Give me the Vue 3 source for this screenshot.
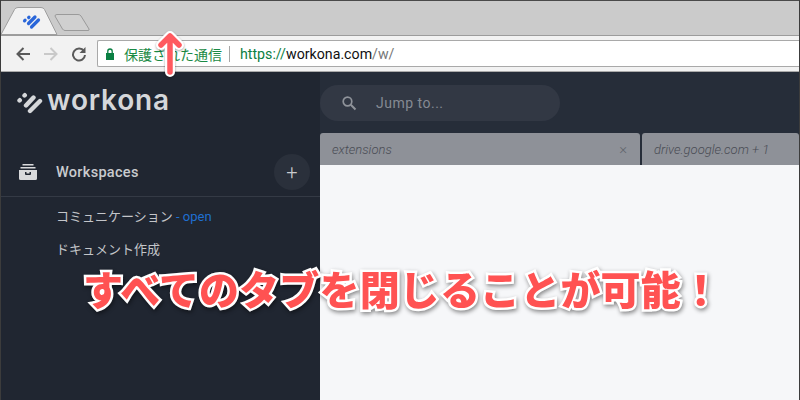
<script setup>
const workspaces = [
  { name: 'コミュニケーション', open: true },
  { name: 'ドキュメント作成', open: false },
]
</script>

<template>
  <div class="page">
    <header class="tabstrip">
      <svg class="tabs" width="95" height="35" viewBox="0 0 95 35">
        <path d="M57 34.500H1L14.500 9.500Q15.500 7.500 18 7.500H41Q43.500 7.500 44.500 9.500Z" fill="#f2f2f2" stroke="#9e9e9e" />
        <path d="M55 16Q55 14.500 57 14.500H78Q80 14.500 81 16L89 29Q89.500 30.500 88 30.500H65Q63.500 30.500 62.500 29L55.500 17Z" fill="#d0d0d0" stroke="#9a9a9a" />
        <g stroke="#2a66d9" fill="none" stroke-linecap="round">
          <path d="M24.500 20.800l.6-.6M28.700 17.500l.3-.3" stroke-width="3.200" />
          <path d="M28.500 23.500l6.500-6.500M31.500 27l7-7" stroke-width="3.200" />
        </g>
      </svg>
    </header>

    <div class="toolbar">
      <svg class="nav" width="16" height="16" viewBox="0 0 16 16"><path d="M15 8H2.500M8.500 2L2.500 8l6 6" fill="none" stroke="#5a5a5a" stroke-width="2" /></svg>
      <svg class="nav" width="16" height="16" viewBox="0 0 16 16"><path d="M1 8h12.500M7.500 2l6 6-6 6" fill="none" stroke="#c9c9c9" stroke-width="2" /></svg>
      <svg class="nav" width="16" height="16" viewBox="0 0 16 16"><path d="M13 5.200A6 6 0 1 0 14 9" fill="none" stroke="#5a5a5a" stroke-width="2" /><path d="M14.500 1v6h-6z" fill="#5a5a5a" /></svg>
      <div class="omnibox">
        <svg width="10" height="12" viewBox="0 0 10 12"><path d="M1 5h8v7H1z" fill="#0b8043" /><path d="M2.800 5V3.200a2.200 2.200 0 0 1 4.400 0V5" fill="none" stroke="#0b8043" stroke-width="1.300" /></svg>
        <span class="secure">保護された通信</span>
        <span class="sep"></span>
        <span class="url"><span class="https">https://</span>workona.com<span class="path">/w/</span></span>
      </div>
    </div>

    <main class="app">
      <aside class="sidebar">
        <div class="brand">
          <svg class="mark" width="26" height="23" viewBox="0 0 26 23">
            <g stroke="#d5d7da" fill="none" stroke-linecap="round">
              <path d="M2.500 9.500l.3-.3M7.500 4.500l.3-.3" stroke-width="4.400" />
              <path d="M9 14.500l7.500-8M13 20l10-10" stroke-width="4.400" />
            </g>
          </svg>
          <span class="logotype">workona</span>
        </div>

        <div class="section-head">
          <svg class="box" width="18" height="16" viewBox="0 0 18 16">
            <path d="M3.500 0h11v1.500h-11zM1.500 3h15v1.500h-15zM0 6h18v8.500q0 1.500-1.500 1.500h-15Q0 16 0 14.500zM6 8v2q0 1 1 1h4q1 0 1-1V8h-1.500v1.500h-3V8z" fill="#d9dadc" fill-rule="evenodd" />
          </svg>
          <span class="section-title">Workspaces</span>
          <span class="add">+</span>
        </div>

        <ul class="workspace-list">
          <li v-for="w in workspaces" :key="w.name">
            {{ w.name }}<span v-if="w.open" class="open"> - open</span>
          </li>
        </ul>
      </aside>

      <section class="content">
        <div class="search">
          <svg width="16" height="16" viewBox="0 0 16 16"><circle cx="6.500" cy="6.500" r="4.300" fill="none" stroke="#8f939a" stroke-width="1.700" /><path d="M9.800 9.800l4.700 4.700" stroke="#8f939a" stroke-width="2" /></svg>
          <span>Jump to...</span>
        </div>
        <div class="pagetabs">
          <div class="pagetab first"><em>extensions</em><span class="close">×</span></div>
          <div class="pagetab second"><em>drive.google.com + 1</em></div>
        </div>
        <div class="blank"></div>
      </section>
    </main>

    <svg class="arrow" width="34" height="50" viewBox="0 0 34 50">
      <path d="M17 6L8 15M17 6l9 9M17 6v36" fill="none" stroke="#fff" stroke-width="10" stroke-linecap="round" stroke-linejoin="round" />
      <path d="M17 6L8 15M17 6l9 9M17 7v35" fill="none" stroke="#ff5a5f" stroke-width="5.500" stroke-linecap="round" stroke-linejoin="round" />
    </svg>
    <div class="caption">すべてのタブを閉じることが可能！</div>
  </div>
</template>

<style scoped>
.page {
  position: relative;
  width: 800px;
  height: 400px;
  overflow: hidden;
  display: flex;
  flex-direction: column;
  box-sizing: border-box;
  font-family: Roboto, "Noto Sans CJK JP", sans-serif;
  background: #232934;
  border-left: 1px solid #3c3c3c;
  border-right: 1px solid #3c3c3c;
}
.tabstrip {
  height: 36px;
  box-sizing: border-box;
  flex: none;
  background: #cbcbcb;
  border-top: 1px solid #4a4a4a;
  border-bottom: 1px solid #9c9c9c;
  position: relative;
}
.tabs {
  position: absolute;
  left: -1px;
  top: -1px;
}
.toolbar {
  height: 36px;
  box-sizing: border-box;
  flex: none;
  display: flex;
  align-items: center;
  padding: 0 0 0 14px;
  gap: 12px;
  background: #f2f2f2;
  border-bottom: 1px solid #aaa;
}
.nav {
  flex: none;
}
.omnibox {
  flex: 1;
  height: 27px;
  margin-left: -2px;
  box-sizing: border-box;
  display: flex;
  align-items: center;
  padding-left: 7px;
  background: #fff;
  border: 1px solid #a9a9a9;
  border-right: none;
  border-radius: 2px 0 0 2px;
  font-size: 14px;
}
.secure {
  margin-left: 9px;
  color: #1a8a45;
}
.sep {
  width: 1px;
  height: 16px;
  margin: 0 10px 0 7px;
  background: #a6a6a6;
}
.url {
  color: #111;
  font-size: 14.200px;
}
.https {
  color: #0b8043;
}
.path {
  color: #777;
}
.app {
  flex: 1;
  display: flex;
  min-height: 0;
}
.sidebar {
  width: 319px;
  flex: none;
  background: #202631;
}
.brand {
  height: 56px;
  display: flex;
  align-items: center;
  padding-left: 16px;
  gap: 4px;
  color: #d5d7da;
}
.mark {
  margin-top: 4px;
}
.logotype {
  font-family: Inter, sans-serif;
  font-size: 28px;
  font-weight: 600;
  letter-spacing: 0.8px;
  line-height: 1;
}
.section-head {
  height: 40px;
  margin-top: 24px;
  padding: 0 10px 4px 18px;
  display: flex;
  align-items: center;
  border-bottom: 1px solid #343a45;
}
.section-title {
  flex: 1;
  margin-left: 19px;
  font-size: 14.500px;
  font-weight: 500;
  letter-spacing: 0.3px;
  color: #c9cbce;
}
.add {
  width: 36px;
  height: 36px;
  border-radius: 50%;
  background: #2a303b;
  color: #c9cbce;
  font-size: 20px;
  font-weight: 300;
  display: flex;
  align-items: center;
  justify-content: center;
}
.workspace-list {
  list-style: none;
  margin: 0;
  padding: 3px 0 0 55px;
  font-size: 13px;
  color: #c3c5c9;
}
.workspace-list li {
  height: 33px;
  line-height: 33px;
}
.open {
  color: #1f6fd0;
  font-size: 13px;
}
.content {
  flex: 1;
  min-width: 0;
  display: flex;
  flex-direction: column;
  background: #262d39;
}
.search {
  width: 240px;
  height: 36px;
  margin-top: 13px;
  flex: none;
  box-sizing: border-box;
  border-radius: 18px;
  background: #323844;
  display: flex;
  align-items: center;
  padding-left: 21px;
  gap: 19px;
  color: #858a93;
  font-size: 14px;
  letter-spacing: 0.5px;
}
.pagetabs {
  margin-top: 12px;
  height: 32px;
  flex: none;
  display: flex;
  gap: 2px;
}
.pagetab {
  box-sizing: border-box;
  height: 32px;
  display: flex;
  align-items: center;
  background: #8e9198;
  border-radius: 3px 3px 0 0;
  padding: 0 12px;
  color: #4a4d55;
  font-size: 13px;
  font-weight: 300;
}
.pagetab.first {
  width: 320px;
  justify-content: space-between;
}
.pagetab.second {
  flex: 1;
}
.close {
  font-size: 15px;
  color: #62656c;
  margin-right: 1px;
}
.blank {
  flex: 1;
  background: #f6f7f9;
}
.arrow {
  position: absolute;
  left: 152px;
  top: 30px;
  filter: drop-shadow(0 1px 1px rgba(0, 0, 0, 0.35));
}
.caption {
  position: absolute;
  left: 82px;
  top: 263px;
  white-space: nowrap;
  font-family: "Noto Sans CJK JP", sans-serif;
  font-size: 40px;
  font-weight: 900;
  letter-spacing: 0.15px;
  line-height: 50px;
  color: #ff5252;
  -webkit-text-stroke: 5px #fff;
  paint-order: stroke fill;
  filter: drop-shadow(1px 2px 2px rgba(0, 0, 0, 0.45));
}
</style>
